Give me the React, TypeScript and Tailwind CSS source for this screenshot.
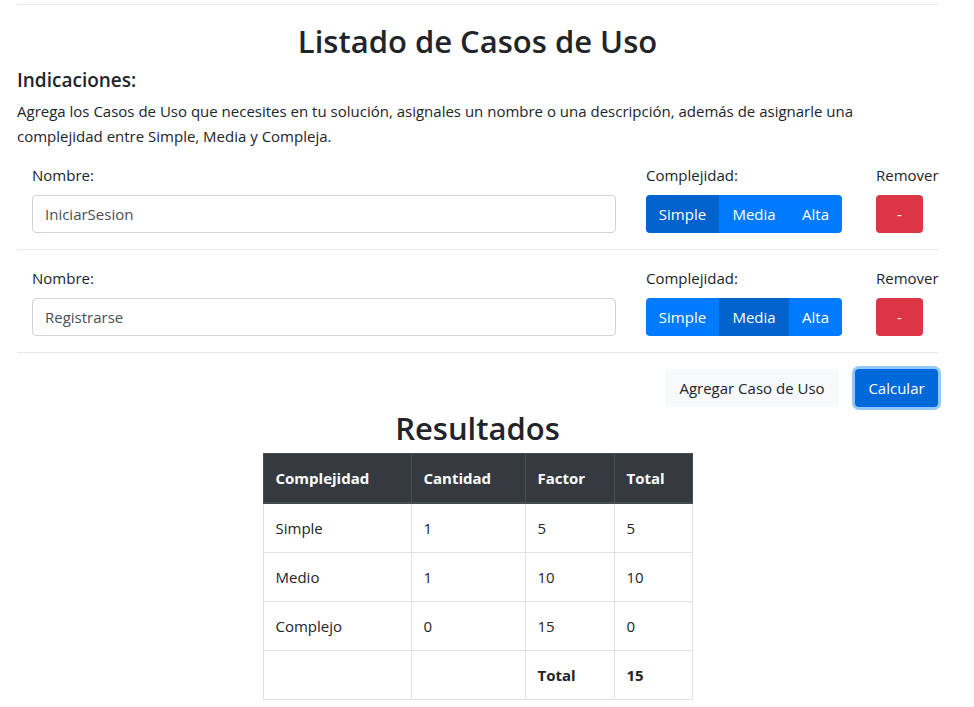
import React from "react";

const font = { fontFamily: '"Open Sans", "Noto Sans", sans-serif' };

function UseCaseRow({ name, active }: { name: string; active: number }) {
  const opts = [
    { label: "Simple", w: "w-[73px]" },
    { label: "Media", w: "w-[70px]" },
    { label: "Alta", w: "w-[53px]" },
  ];
  return (
    <div className="flex items-start pl-[15px]">
      <div className="w-[584px] flex flex-col">
        <div className="h-6 leading-6 text-[15px] mb-2">Nombre:</div>
        <div className="h-[38px] border border-[#ced4da] rounded-[4px] px-3 flex items-center text-[15px] text-[#495057] mb-4">
          {name}
        </div>
      </div>
      <div className="ml-[30px] flex flex-col">
        <div className="h-6 leading-6 text-[15px] mb-2">Complejidad:</div>
        <div className="flex h-[38px] rounded-[4px] overflow-hidden">
          {opts.map((o, i) => (
            <div
              key={o.label}
              className={`${o.w} flex items-center justify-center text-white text-[15px] ${
                i === active ? "bg-[#0062cc]" : "bg-[#007bff]"
              }`}
            >
              {o.label}
            </div>
          ))}
        </div>
      </div>
      <div className="ml-auto flex flex-col w-[62px]">
        <div className="h-6 leading-6 text-[15px] mb-2">Remover</div>
        <div className="w-[47px] h-[38px] bg-[#dc3545] rounded-[4px] text-white flex items-center justify-center text-[15px]">
          -
        </div>
      </div>
    </div>
  );
}

export default function App() {
  const rows = [
    ["Simple", "1", "5", "5"],
    ["Medio", "1", "10", "10"],
    ["Complejo", "0", "15", "0"],
  ];
  const widths = ["w-[148px]", "w-[114px]", "w-[89px]", "w-[78px]"];
  const td = "py-3 px-3 leading-6 border border-[#dee2e6]";
  return (
    <div className="bg-white text-[#212529] min-h-[707px]" style={font}>
      <div className="pl-[17px] pr-[36px] pt-[4px] pb-4">
        <div className="border-t border-[#e5e7ea] mb-[17px]" />
        <h2 className="text-[31px] font-semibold leading-[38px] text-center mb-[8px]">
          Listado de Casos de Uso
        </h2>
        <h5 className="text-[19px] font-semibold leading-6 mb-[7px]">Indicaciones:</h5>
        <p className="text-[15px] leading-[25px] mb-[14px]">
          Agrega los Casos de Uso que necesites en tu solución, asignales un nombre o una descripción, además de asignarle una complejidad entre Simple, Media y Compleja.
        </p>
        <UseCaseRow name="IniciarSesion" active={0} />
        <div className="border-t border-[#e5e7ea] mb-4" />
        <UseCaseRow name="Registrarse" active={1} />
        <div className="border-t border-[#e5e7ea] mb-4" />
        <div className="flex justify-end gap-4">
          <div className="h-[38px] w-[174px] bg-[#f8f9fa] rounded-[4px] flex items-center justify-center text-[15px]">
            Agregar Caso de Uso
          </div>
          <div className="h-[38px] w-[83px] bg-[#0069d9] rounded-[4px] flex items-center justify-center text-white text-[15px] shadow-[0_0_0_3px_rgba(38,143,255,0.5)]">
            Calcular
          </div>
        </div>
        <h2 className="text-[31px] font-semibold leading-[38px] text-center mt-[2px] mb-[6px]">
          Resultados
        </h2>
        <div className="flex justify-center">
          <table className="border-collapse text-[15px]">
            <thead>
              <tr className="bg-[#343a40] text-white">
                {["Complejidad", "Cantidad", "Factor", "Total"].map((h, i) => (
                  <th
                    key={h}
                    className={`${widths[i]} py-3 px-3 leading-6 text-left font-bold border border-[#454d55] border-b-2`}
                  >
                    {h}
                  </th>
                ))}
              </tr>
            </thead>
            <tbody>
              {rows.map((r) => (
                <tr key={r[0]}>
                  {r.map((c, i) => (
                    <td key={i} className={td}>
                      {c}
                    </td>
                  ))}
                </tr>
              ))}
              <tr>
                <td className={td}></td>
                <td className={td}></td>
                <td className={`${td} font-bold`}>Total</td>
                <td className={`${td} font-bold`}>15</td>
              </tr>
            </tbody>
          </table>
        </div>
      </div>
    </div>
  );
}
